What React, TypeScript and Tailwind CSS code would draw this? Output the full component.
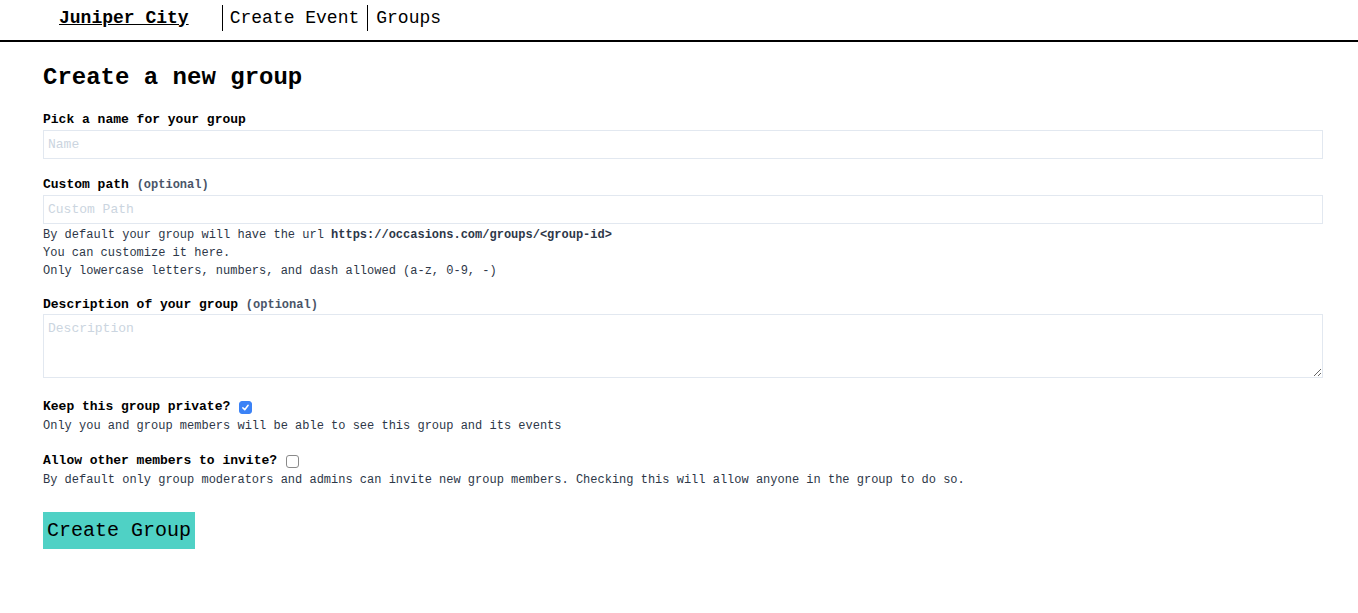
import React, { useState } from "react";

const mono = { fontFamily: '"Liberation Mono", "Courier New", monospace' };

const Check = ({ checked, onChange }: { checked: boolean; onChange: () => void }) => (
  <button
    type="button"
    onClick={onChange}
    className={`ml-[9px] inline-flex h-[13px] w-[13px] items-center justify-center rounded-[3px] border ${
      checked ? "border-[#3b82f6] bg-[#3b82f6]" : "border-[#8a8a8a] bg-white"
    }`}
  >
    {checked && (
      <svg viewBox="0 0 12 12" className="h-[9px] w-[9px]" fill="none" stroke="white" strokeWidth="2" strokeLinecap="round" strokeLinejoin="round">
        <path d="M2.5 6.5 5 9l4.5-6" />
      </svg>
    )}
  </button>
);

const App = () => {
  const [isPrivate, setIsPrivate] = useState(true);
  const [allowInvite, setAllowInvite] = useState(false);

  return (
    <div className="min-h-[613px] bg-white text-black" style={mono}>
      <nav className="flex h-[42px] items-start border-b-2 border-black pt-[5px]">
        <a className="ml-[59px] mr-[33px] flex h-[26px] items-center text-[18px] font-bold underline">Juniper City</a>
        <a className="flex h-[26px] items-center border-l border-black pl-[7px] pr-[8px] text-[18px]">Create Event</a>
        <a className="flex h-[26px] items-center border-l border-black pl-[8px] text-[18px]">Groups</a>
      </nav>

      <main className="w-[1323px] pl-[43px]">
        <h1 className="mt-[20px] text-[24px] font-bold leading-[32px]">Create a new group</h1>

        <form className="flex flex-col">
          <label className="mt-[18px] text-[13px] font-bold leading-[16px]">Pick a name for your group</label>
          <input
            className="mt-[2px] h-[29px] border border-[#e2e8f0] px-[4px] text-[13px] outline-none placeholder:text-[#cbd5e0]"
            style={mono}
            placeholder="Name"
          />

          <label className="mt-[18px] text-[13px] font-bold leading-[16px]">
            Custom path <span className="text-[12px] text-[#4a5568]">(optional)</span>
          </label>
          <input
            className="mt-[2px] h-[29px] border border-[#e2e8f0] px-[4px] text-[13px] outline-none placeholder:text-[#cbd5e0]"
            style={mono}
            placeholder="Custom Path"
          />
          <div className="pt-[2px] text-[12px] leading-[18px] text-[#2d3748]">
            <p>
              By default your group will have the url <b>https://occasions.com/groups/&lt;group-id&gt;</b>
            </p>
            <p>You can customize it here.</p>
            <p>Only lowercase letters, numbers, and dash allowed (a-z, 0-9, -)</p>
          </div>

          <label className="mt-[17px] text-[13px] font-bold leading-[16px]">
            Description of your group <span className="text-[12px] text-[#4a5568]">(optional)</span>
          </label>
          <textarea
            className="mt-[1px] h-[64px] border border-[#e2e8f0] px-[4px] py-[4px] text-[13px] outline-none placeholder:text-[#cbd5e0]"
            style={mono}
            placeholder="Description"
          />

          <div className="mt-[21px] flex items-center text-[13px] font-bold leading-[16px]">
            Keep this group private?
            <Check checked={isPrivate} onChange={() => setIsPrivate(!isPrivate)} />
          </div>
          <p className="mt-[2px] text-[12px] leading-[18px] text-[#2d3748]">
            Only you and group members will be able to see this group and its events
          </p>

          <div className="mt-[18px] flex items-center text-[13px] font-bold leading-[16px]">
            Allow other members to invite?
            <Check checked={allowInvite} onChange={() => setAllowInvite(!allowInvite)} />
          </div>
          <p className="mt-[2px] text-[12px] leading-[18px] text-[#2d3748]">
            By default only group moderators and admins can invite new group members. Checking this will allow anyone in the group to do so.
          </p>

          <div className="mt-[23px]">
            <button
              type="button"
              className="h-[37px] w-[152px] bg-[#4fd1c5] text-[20px] text-black"
              style={mono}
            >
              Create Group
            </button>
          </div>
        </form>
      </main>
    </div>
  );
};

export default App;
